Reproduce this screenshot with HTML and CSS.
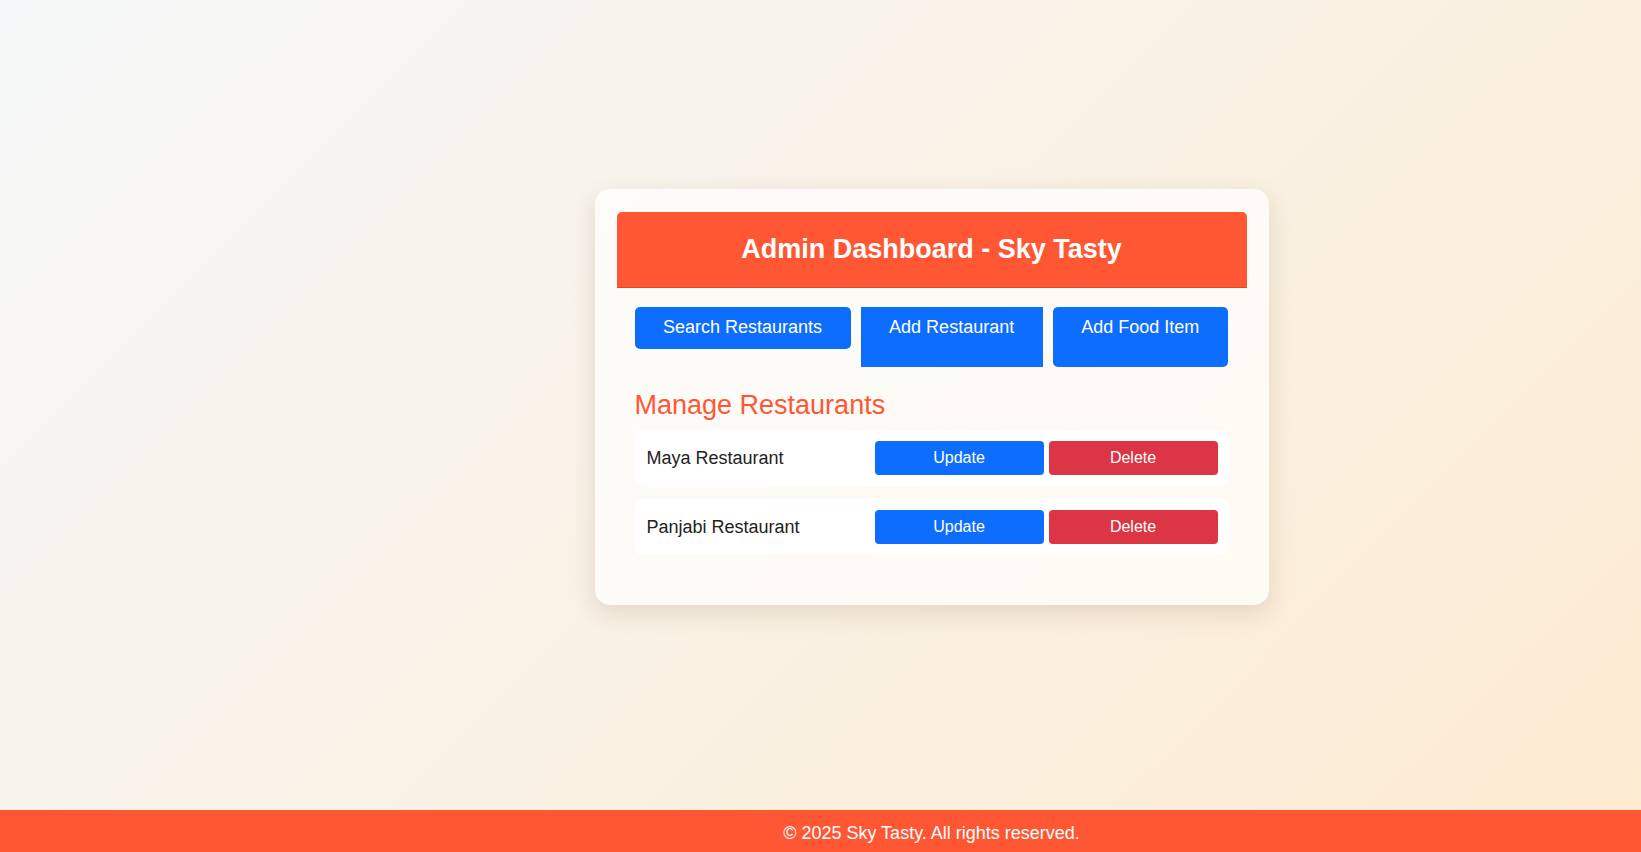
FILE: index.html
```html
<!DOCTYPE html>
<html lang="en">
<head>
<meta charset="UTF-8">
<title>Admin Dashboard - Sky Tasty</title>
<link rel="stylesheet" href="styles.css">
</head>
<body>
<main class="page">
  <div class="card">
    <header class="card-header">
      <h1 class="title">Admin Dashboard - Sky Tasty</h1>
    </header>
    <section class="content">
      <div class="actions">
        <button class="btn">Search Restaurants</button>
        <a class="btn btn-tall btn-square">Add Restaurant</a>
        <button class="btn btn-tall">Add Food Item</button>
      </div>
      <h2 class="section-title">Manage Restaurants</h2>
      <ul class="list">
        <li class="row">
          <span class="name">Maya Restaurant</span>
          <div class="row-actions">
            <button class="small-btn update">Update</button>
            <button class="small-btn delete">Delete</button>
          </div>
        </li>
        <li class="row">
          <span class="name">Panjabi Restaurant</span>
          <div class="row-actions">
            <button class="small-btn update">Update</button>
            <button class="small-btn delete">Delete</button>
          </div>
        </li>
      </ul>
    </section>
  </div>
</main>
<footer class="footer">© 2025 Sky Tasty. All rights reserved.</footer>
</body>
</html>
```

FILE: styles.css
```css
* { box-sizing: border-box; }

html, body { height: 100%; }

body {
  margin: 0;
  display: flex;
  flex-direction: column;
  font-family: "Liberation Sans", Arial, sans-serif;
  background: linear-gradient(135deg, #f5f7f8 0%, #fdebd1 100%);
  color: #222;
}

.page {
  flex: 1;
  display: flex;
  align-items: center;
  justify-content: center;
  padding-left: 222px;
  padding-bottom: 16px;
}

.card {
  width: 674px;
  padding: 23px 22px 50px;
  border-radius: 15px;
  background: rgba(255, 255, 255, 0.68);
  box-shadow: 0 8px 24px rgba(90, 60, 20, 0.14);
}

.card-header {
  height: 76px;
  display: flex;
  align-items: center;
  justify-content: center;
  background: #ff5733;
  border-radius: 5px 5px 0 0;
  border-bottom: 1px solid #d9492b;
}

.title {
  margin: 0;
  color: #fff;
  font-size: 27px;
  font-weight: bold;
}

.content {
  padding: 0 18px;
}

.actions {
  display: flex;
  align-items: flex-start;
  gap: 10px;
  margin-top: 19px;
}

.btn {
  display: block;
  padding: 10px 28.5px 11px;
  border: none;
  border-radius: 5px;
  background: #0d6efd;
  color: #fff;
  font-family: inherit;
  font-size: 18px;
  line-height: 21px;
  text-decoration: none;
  cursor: pointer;
}

.btn-tall {
  padding-bottom: 29px;
}

.btn-square {
  border-radius: 0;
}

.section-title {
  margin: 23px 0 9px;
  color: #ff5733;
  font-size: 27px;
  font-weight: normal;
}

.list {
  list-style: none;
  margin: 0;
  padding: 0;
  display: flex;
  flex-direction: column;
  gap: 13px;
}

.row {
  display: flex;
  align-items: center;
  justify-content: space-between;
  padding: 11px 11px 11px 12px;
  background: #fff;
  border-radius: 8px;
}

.name {
  font-size: 18px;
  color: #222;
}

.row-actions {
  display: flex;
  gap: 5px;
}

.small-btn {
  width: 169px;
  height: 34px;
  border: none;
  border-radius: 4px;
  color: #fff;
  font-family: inherit;
  font-size: 16px;
  cursor: pointer;
}

.update { background: #0d6efd; }
.delete { background: #dc3545; }

.footer {
  height: 42px;
  display: flex;
  align-items: center;
  justify-content: center;
  padding: 5px 0 0 222px;
  background: #ff5733;
  color: #fff;
  font-size: 18px;
}
```
